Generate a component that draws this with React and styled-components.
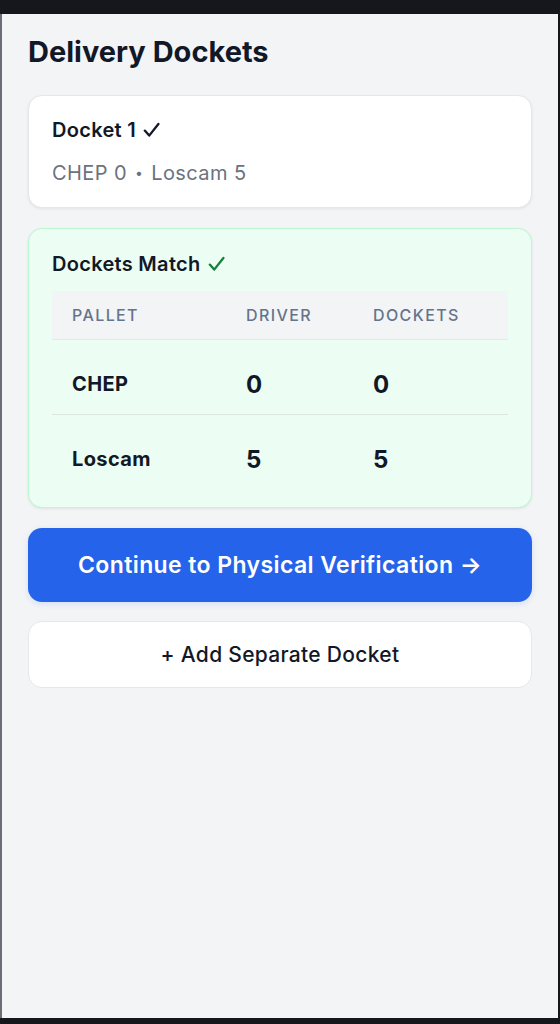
import React from 'react';
import styled, { createGlobalStyle } from 'styled-components';

const GlobalStyle = createGlobalStyle`
  html, body {
    margin: 0;
    padding: 0;
    background: #15171c;
  }
  * {
    box-sizing: border-box;
  }
  body {
    font-family: Inter, "Noto Sans", "Liberation Sans", sans-serif;
    -webkit-font-smoothing: antialiased;
  }
`;

const Screen = styled.div`
  margin: 14px 2px 0 0;
  height: 1004px;
  background: #f3f4f6;
  border-left: 2px solid #6b6e74;
  padding: 20px 26px 0 26px;
  display: flex;
  flex-direction: column;
  gap: 20px;
`;

const Title = styled.h1`
  margin: 0 0 5px;
  font-size: 29px;
  line-height: 36px;
  font-weight: 700;
  color: #111827;
`;

const Card = styled.div`
  background: ${(p) => (p.$success ? '#ecfdf3' : '#ffffff')};
  border: 1px solid ${(p) => (p.$success ? '#bbf7d0' : '#e5e7eb')};
  border-radius: 14px;
  box-shadow: 0 1px 3px rgba(15, 23, 42, 0.08);
  padding: ${(p) => (p.$success ? '21px 23px 18px' : '20px 23px 20px')};
  display: flex;
  flex-direction: column;
  gap: ${(p) => (p.$success ? '13px' : '15px')};
`;

const CardTitle = styled.div`
  font-size: 20px;
  line-height: 28px;
  font-weight: 600;
  letter-spacing: 0.3px;
  color: #111827;
  display: flex;
  align-items: center;
  gap: 7px;
`;

const CheckMark = ({ color = '#111827' }) => (
  <svg width="17" height="16" viewBox="0 0 17 16" fill="none">
    <path
      d="M1.8 8.6 L6.2 13.6 L15.4 2"
      stroke={color}
      strokeWidth="2.3"
      strokeLinecap="round"
      strokeLinejoin="round"
    />
  </svg>
);

const Summary = styled.div`
  font-size: 20px;
  line-height: 28px;
  letter-spacing: 0.4px;
  color: #6b7280;
`;

const Dot = styled.span`
  font-size: 14px;
  vertical-align: 2px;
  margin: 0 2px;
`;

const Table = styled.div`
  display: grid;
  grid-template-columns: 174px 127px 1fr;
`;

const HeadCell = styled.div`
  background: #f3f4f6;
  height: 49px;
  padding: 0 20px;
  display: flex;
  align-items: center;
  border-bottom: 1px solid #e2e8f0;
  font-size: 16px;
  font-weight: 500;
  letter-spacing: 1.4px;
  color: #64748b;
  text-transform: uppercase;
`;

const Cell = styled.div`
  height: ${(p) => (p.$last ? '74px' : '75px')};
  padding: 14px 20px 0;
  display: flex;
  align-items: center;
  border-bottom: ${(p) => (p.$last ? 'none' : '1px solid #dbe7e0')};
  color: #111827;
  font-size: ${(p) => (p.$num ? '24px' : '20px')};
  letter-spacing: ${(p) => (p.$num ? '0' : '0.4px')};
  font-weight: 700;
`;

const PrimaryButton = styled.button`
  height: 74px;
  border: none;
  border-radius: 14px;
  background: #2563eb;
  color: #ffffff;
  font-family: inherit;
  font-size: 23px;
  font-weight: 600;
  letter-spacing: 0.4px;
  box-shadow: 0 2px 6px rgba(37, 99, 235, 0.15);
  cursor: pointer;
`;

const SecondaryButton = styled.button`
  height: 67px;
  margin-top: -1px;
  border: 1px solid #e5e7eb;
  border-radius: 14px;
  background: #ffffff;
  color: #111827;
  font-family: inherit;
  font-size: 21px;
  font-weight: 500;
  letter-spacing: 0.3px;
  cursor: pointer;
`;

const rows = [
  { pallet: 'CHEP', driver: 0, dockets: 0 },
  { pallet: 'Loscam', driver: 5, dockets: 5 },
];

export default function App() {
  return (
    <>
      <GlobalStyle />
      <Screen>
        <Title>Delivery Dockets</Title>

        <Card>
          <CardTitle>
            Docket 1 <CheckMark />
          </CardTitle>
          <Summary>
            CHEP 0 <Dot>•</Dot> Loscam 5
          </Summary>
        </Card>

        <Card $success>
          <CardTitle>
            Dockets Match <CheckMark color="#15803d" />
          </CardTitle>
          <Table>
            <HeadCell>Pallet</HeadCell>
            <HeadCell>Driver</HeadCell>
            <HeadCell>Dockets</HeadCell>
            {rows.map((r, i) => {
              const last = i === rows.length - 1;
              return (
                <React.Fragment key={r.pallet}>
                  <Cell $last={last}>{r.pallet}</Cell>
                  <Cell $last={last} $num>{r.driver}</Cell>
                  <Cell $last={last} $num>{r.dockets}</Cell>
                </React.Fragment>
              );
            })}
          </Table>
        </Card>

        <PrimaryButton>Continue to Physical Verification →</PrimaryButton>
        <SecondaryButton>+ Add Separate Docket</SecondaryButton>
      </Screen>
    </>
  );
}
